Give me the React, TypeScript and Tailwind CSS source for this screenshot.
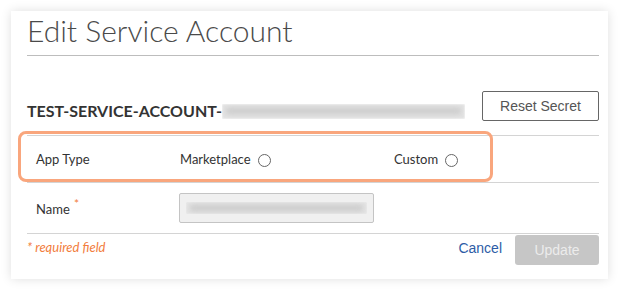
import React from 'react';

const lato = "font-['Lato','Liberation_Sans',sans-serif]";
const arial = "font-['Liberation_Sans',Arial,sans-serif]";

function Radio() {
  return <span className="inline-block h-[13px] w-[13px] rounded-full border border-[#666] bg-white" />;
}

function Blurred({ className }: { className: string }) {
  return (
    <span className={`relative block overflow-hidden ${className}`}>
      <span className="absolute inset-0 bg-[#e2e2e2] blur-[1px]" />
      <span className="absolute inset-x-[4px] top-1/2 h-[7px] -translate-y-1/2 rounded bg-[#cfcfcf] blur-[2px]" />
    </span>
  );
}

export default function App() {
  return (
    <div className={`h-[290px] w-[619px] bg-white pl-[11px] pt-[11px] ${lato}`}>
      <div className="relative h-[268px] w-[597px] bg-white pl-[16px] pr-[9px] pt-[1px] shadow-[0_0_10px_rgba(0,0,0,0.13)]">
        <h1 className="text-[30px] font-light leading-[36px] text-[#4a4a4a]">Edit Service Account</h1>
        <div className="mt-[7px] border-t border-[#bdbdbd]" />

        <div className="flex items-end justify-between pb-[14px] pt-[35px]">
          <div className="flex items-center">
            <span className="text-[16px] font-bold leading-[20px] text-[#333]">TEST-SERVICE-ACCOUNT-</span>
            <Blurred className="h-[15px] w-[243px]" />
          </div>
          <button
            type="button"
            className={`h-[30px] w-[117px] rounded-[2px] border border-[#666] bg-white text-[14px] text-[#555] ${arial}`}
          >
            Reset Secret
          </button>
        </div>

        <div className="grid h-[47px] grid-cols-[144px_214px_1fr] items-center border-t border-[#d4d4d4] pl-[9px] pt-[2px] text-[13px] text-[#333]">
          <span>App Type</span>
          <span className="flex items-center gap-[7px]">
            Marketplace <Radio />
          </span>
          <span className="flex items-center gap-[7px]">
            Custom <Radio />
          </span>
        </div>

        <div className="grid h-[51px] grid-cols-[143px_1fr] items-center border-t border-[#d4d4d4] pl-[9px] text-[13px] text-[#333]">
          <span className="relative top-[2px]">
            Name <sup className="ml-[1px] text-[12px] text-[#f27c3c]">*</sup>
          </span>
          <div className="flex h-[30px] w-[195px] items-center rounded-[2px] border border-[#c4c4c4] bg-[#f0f0f0] px-[6px]">
            <Blurred className="h-[12px] w-full" />
          </div>
        </div>

        <div className="flex items-center justify-between border-t border-[#d4d4d4] pt-[1px]">
          <span className="relative -top-[2px] text-[13px] italic text-[#f27c3c]">* required field</span>
          <div className="flex items-center gap-[13px]">
            <button type="button" className={`relative -top-[2px] text-[14px] text-[#2d5ca6] ${arial}`}>
              Cancel
            </button>
            <button
              type="button"
              className={`h-[30px] w-[84px] rounded-[3px] bg-[#c6c6c6] text-[14px] text-[#ececec] ${arial}`}
            >
              Update
            </button>
          </div>
        </div>

        <div className="pointer-events-none absolute left-[7px] top-[120px] h-[51px] w-[475px] rounded-[8px] border-[3px] border-[#f9a67d]" />
      </div>
    </div>
  );
}
